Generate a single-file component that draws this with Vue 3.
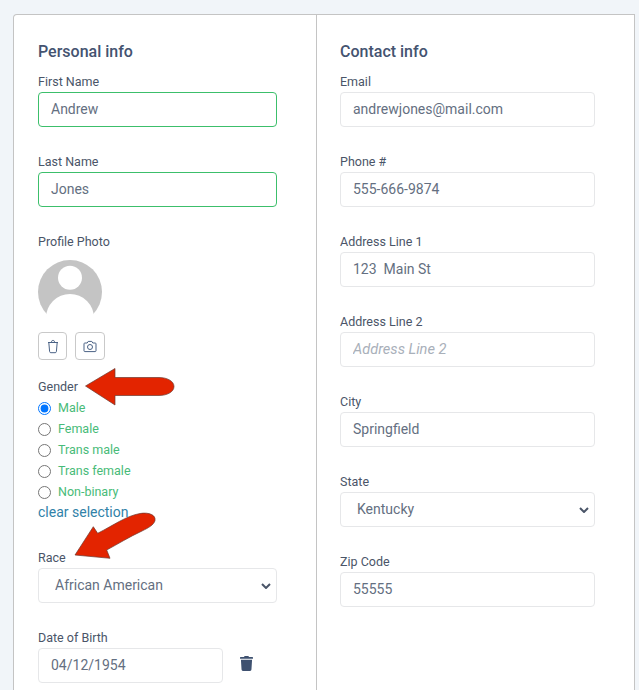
<template>
  <div class="page">
    <div class="card">
      <section class="col col-left">
        <h2>Personal info</h2>

        <div class="field">
          <label>First Name</label>
          <input class="valid" type="text" value="Andrew" />
        </div>
        <div class="field">
          <label>Last Name</label>
          <input class="valid" type="text" value="Jones" />
        </div>

        <div class="photo">
          <label>Profile Photo</label>
          <svg class="avatar" width="64" height="64" viewBox="0 0 64 64">
            <circle cx="32" cy="32" r="32" fill="#c4c4c4" />
            <circle cx="32" cy="17.7" r="12" fill="#fff" />
            <circle cx="32" cy="58" r="24" fill="#fff" />
          </svg>
          <div class="photo-btns">
            <button type="button" class="icon-btn">
              <svg width="14" height="15" viewBox="0 0 14 15" fill="none" stroke="#4a6285" stroke-width="1">
                <path d="M2 3.500h10M5.500 3.300c0-1.300.2-1.800 1.500-1.800s1.500.5 1.500 1.800M2.800 3.500l.8 9c.1.8.5 1.200 1.200 1.200h4.400c.7 0 1.100-.4 1.200-1.200l.8-9" />
              </svg>
            </button>
            <button type="button" class="icon-btn wide">
              <svg width="14" height="13" viewBox="0 0 14 13" fill="none" stroke="#4a6285" stroke-width="1">
                <path d="M1.800 3h2.400l1-1.600h3.600l1 1.600h2.400c.5 0 .8.3.8.8v7c0 .5-.3.8-.8.8H1.800c-.5 0-.8-.3-.8-.8v-7c0-.5.3-.8.8-.8z" />
                <circle cx="7" cy="7" r="2.500" />
              </svg>
            </button>
          </div>
        </div>

        <div class="gender">
          <label>Gender</label>
          <label v-for="g in genders" :key="g" class="radio">
            <input type="radio" name="gender" :value="g" v-model="gender" />
            <span>{{ g }}</span>
          </label>
          <a class="clear">clear selection</a>
        </div>

        <div class="field">
          <label>Race</label>
          <select>
            <option>African American</option>
          </select>
        </div>

        <div class="field last">
          <label>Date of Birth</label>
          <div class="date-row">
            <input type="text" value="04/12/1954" />
            <svg class="trash" width="13" height="15" viewBox="0 0 448 512">
              <path fill="#3e5170" d="M432 32H312l-9.400-18.700A24 24 0 0 0 281.100 0H166.800a23.700 23.700 0 0 0-21.400 13.300L136 32H16A16 16 0 0 0 0 48v32a16 16 0 0 0 16 16h416a16 16 0 0 0 16-16V48a16 16 0 0 0-16-16zM53.200 467a48 48 0 0 0 47.900 45h245.800a48 48 0 0 0 47.900-45L416 128H32z" />
            </svg>
          </div>
        </div>
      </section>

      <section class="col col-right">
        <h2>Contact info</h2>
        <div v-for="f in contact" :key="f.label" class="field">
          <label>{{ f.label }}</label>
          <select v-if="f.select">
            <option>{{ f.value }}</option>
          </select>
          <input v-else type="text" :value="f.value" :placeholder="f.placeholder" />
        </div>
      </section>

      <svg class="arrows" width="200" height="220" viewBox="0 0 200 220">
        <path class="arrow" d="M71.500 26L101 8.500V17.500H145C153 17.500 160 21 160 26.500C160 32 153 35.500 145 35.500H101V45Z" />
        <path class="arrow" d="M61 195L79.300 166.700L83.700 173.300C100 165 112 156 126 153.500C135 152 142 155 141 160.500C140 165 134 168 128 171C115 177 104 184 92.700 190L96 198.300Z" />
      </svg>
    </div>
  </div>
</template>

<script setup>
import { ref } from 'vue';

const genders = ['Male', 'Female', 'Trans male', 'Trans female', 'Non-binary'];
const gender = ref('Male');

const contact = [
  { label: 'Email', value: 'andrewjones@mail.com' },
  { label: 'Phone #', value: '555-666-9874' },
  { label: 'Address Line 1', value: '123  Main St' },
  { label: 'Address Line 2', value: '', placeholder: 'Address Line 2' },
  { label: 'City', value: 'Springfield' },
  { label: 'State', value: 'Kentucky', select: true },
  { label: 'Zip Code', value: '55555' },
];
</script>

<style>
html, body {
  margin: 0;
  height: 690px;
  overflow: hidden;
  background: #f1f5f9;
}
</style>

<style scoped>
.page {
  box-sizing: border-box;
  height: 690px;
  padding: 14px 4px 0 13px;
  overflow: hidden;
  font-family: Roboto, "Liberation Sans", sans-serif;
  color: #4a5568;
}

.card {
  position: relative;
  display: flex;
  box-sizing: border-box;
  height: 676px;
  background: #fff;
  border: 1px solid #c4c4c4;
  border-bottom: none;
  border-radius: 4px 0 0 0;
}

.col {
  box-sizing: border-box;
  padding: 24px 0 0 24px;
}

.col-left {
  width: 303px;
  border-right: 1px solid #c4c4c4;
}

.col-right {
  flex: 1;
  padding-left: 23px;
}

h2 {
  margin: 0 0 8px;
  padding-top: 1px;
  font-size: 16px;
  line-height: 24px;
  font-weight: 500;
  color: #445370;
}

label {
  display: block;
  margin-bottom: 1px;
  padding-top: 1px;
  font-size: 12.5px;
  line-height: 18px;
  color: #4a5568;
}

.field {
  margin-bottom: 25px;
}

.field.last {
  margin-bottom: 0;
}

input[type="text"],
select {
  display: block;
  box-sizing: border-box;
  height: 35px;
  padding: 0 12px 2px;
  border: 1px solid #e6e7e9;
  border-radius: 4px;
  background-color: #fff;
  font-family: inherit;
  font-size: 14px;
  color: #646f81;
  outline: none;
}

.col-left input[type="text"],
.col-left select {
  width: 239px;
}

.col-right input[type="text"],
.col-right select {
  width: 255px;
}

input.valid[type="text"] {
  border-color: #3cbf6b;
}

input::placeholder {
  color: #a9b0ba;
  font-size: 14.6px;
  font-style: italic;
}

select {
  appearance: none;
  padding-left: 16px;
  background-image: url("data:image/svg+xml,%3Csvg xmlns='http://www.w3.org/2000/svg' width='10' height='6' viewBox='0 0 10 6'%3E%3Cpath d='M1 1l4 4 4-4' fill='none' stroke='%234a5568' stroke-width='2'/%3E%3C/svg%3E");
  background-repeat: no-repeat;
  background-position: right 5px center;
}

.photo {
  margin-bottom: 17px;
}

.avatar {
  display: block;
  margin-top: 9px;
}

.photo-btns {
  display: flex;
  gap: 8px;
  margin-top: 8px;
}

.icon-btn {
  display: flex;
  align-items: center;
  justify-content: center;
  box-sizing: border-box;
  width: 29px;
  height: 28px;
  padding: 0;
  background: #fff;
  border: 1px solid #c9c9c9;
  border-radius: 4px;
}

.icon-btn.wide {
  width: 30px;
}

.gender {
  margin-bottom: 26px;
}

.radio {
  display: flex;
  align-items: flex-start;
  height: 21px;
  margin: 0;
  padding: 0;
  line-height: 21px;
  color: #48bb78;
}

.radio input {
  width: 13px;
  height: 13px;
  margin: 5px 7px 0 0;
}

.clear {
  display: block;
  margin-top: 1px;
  font-size: 14px;
  line-height: 19px;
  color: #3182a8;
}

.date-row {
  display: flex;
  align-items: center;
  gap: 17px;
}

.date-row input[type="text"] {
  width: 185px;
}

.trash {
  margin-bottom: 4px;
}

.arrows {
  position: absolute;
  left: 0;
  top: 345px;
  pointer-events: none;
}

.arrow {
  fill: #e32400;
  stroke: #6b3a30;
  stroke-width: 0.7;
}
</style>
